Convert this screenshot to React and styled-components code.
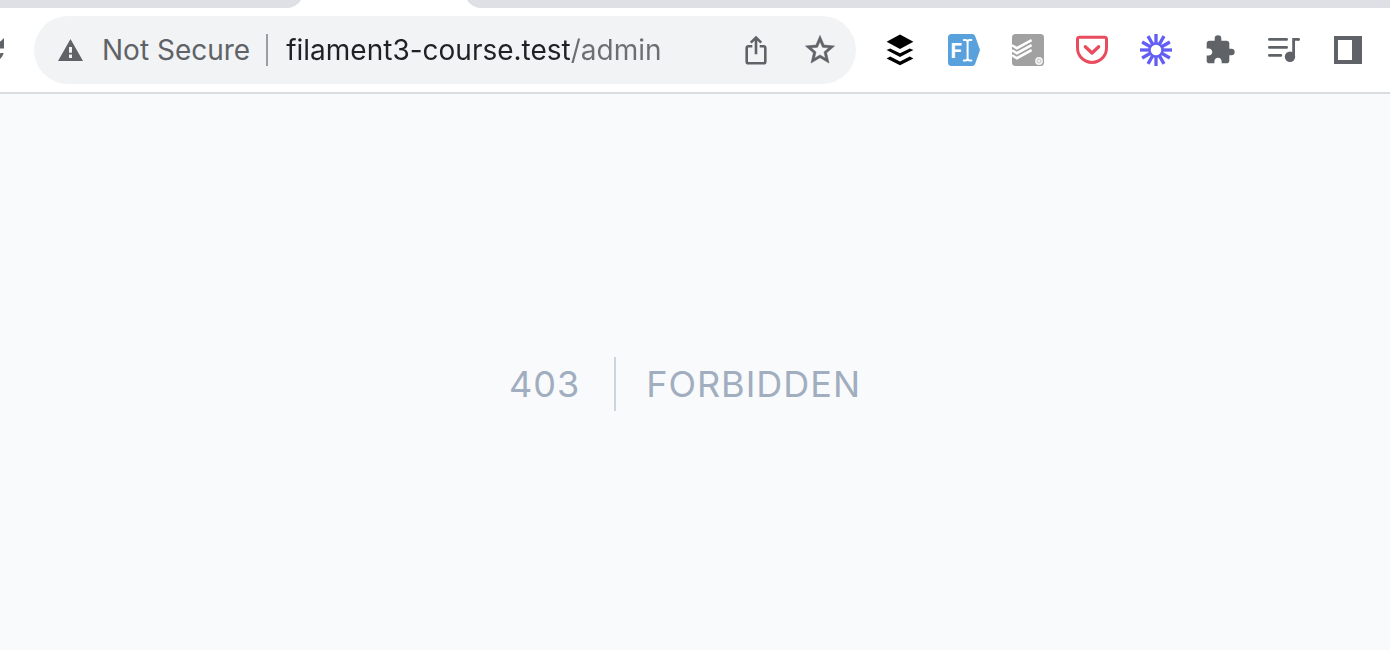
import React from "react";
import styled, { createGlobalStyle } from "styled-components";

const GlobalStyle = createGlobalStyle`
  *, *::before, *::after { box-sizing: border-box; }
  body { margin: 0; background: #f9fafc; }
  button, input { font: inherit; color: inherit; }
`;

const Window = styled.div`
  display: flex;
  flex-direction: column;
  min-height: 100vh;
  font-family: Inter, "Liberation Sans", sans-serif;
`;

const TabStrip = styled.div`
  display: flex;
  align-items: flex-end;
  gap: 162px;
  height: 8px;
  overflow: hidden;
  background: #fff;
`;

const TabGroup = styled.div`
  height: 24px;
  flex: ${(p) => (p.$side === "left" ? "0 0 303px" : "1")};
  background: #dfe0e5;
  border-radius: ${(p) => (p.$side === "left" ? "0 0 16px 0" : "0 0 0 16px")};
`;

const Toolbar = styled.header`
  display: flex;
  align-items: center;
  height: 86px;
  padding-right: 26px;
  background: #fff;
  border-bottom: 2px solid #dadce0;
  color: #5f6368;
`;

const IconButton = styled.button`
  display: flex;
  flex: none;
  align-items: center;
  justify-content: center;
  width: 32px;
  height: 32px;
  padding: 0;
  border: 0;
  background: none;
  cursor: pointer;

  svg { display: block; flex: none; }
`;

const ReloadButton = styled(IconButton)`
  justify-content: flex-end;
  width: 10px;
  height: 36px;
  margin-right: 24px;
  overflow: hidden;
`;

const Omnibox = styled.div`
  display: flex;
  flex: 1;
  align-items: center;
  min-width: 0;
  height: 68px;
  padding: 0 20px 0 24px;
  border-radius: 34px;
  background: #f1f3f4;
  font-size: 28px;
  line-height: 32px;
`;

const SecurityButton = styled.button`
  display: flex;
  flex: none;
  align-items: center;
  gap: 18px;
  padding: 0 16px 0 0;
  border: 0;
  border-right: 2px solid #9a9da1;
  background: none;
  white-space: nowrap;
  cursor: pointer;
`;

const AddressInput = styled.input`
  flex: 1;
  min-width: 0;
  height: 40px;
  margin-left: 18px;
  padding: 0;
  border: 0;
  outline: 0;
  color: #202124;
  background: linear-gradient(to right, #202124 284px, #6b6e72 284px);
  background-clip: text;
  -webkit-text-fill-color: transparent;
`;

const OmniboxActions = styled.div`
  display: flex;
  gap: 32px;
`;

const Extensions = styled.nav`
  display: flex;
  gap: 32px;
  margin-left: 28px;
`;

const ErrorPage = styled.main`
  display: flex;
  flex: 1;
  align-items: flex-start;
  justify-content: center;
  padding: 263px 20px 0 0;
  color: #a0aec0;
  font-size: 36px;
  line-height: 54px;
  letter-spacing: 1px;
`;

const ErrorCode = styled.div`
  padding-right: 34px;
  border-right: 2px solid #cbd5e0;
`;

const ErrorMessage = styled.div`
  padding-left: 30px;
  text-transform: uppercase;
`;

function Icon({ size = 32, viewBox = "0 0 32 32", children }) {
  return (
    <svg width={size} height={size} viewBox={viewBox} fill="currentColor" aria-hidden="true">
      {children}
    </svg>
  );
}

const ReloadIcon = () => (
  <Icon size={36} viewBox="0 0 24 24">
    <path d="M17.65 6.35C16.2 4.9 14.21 4 12 4c-4.42 0-7.99 3.58-7.99 8s3.57 8 7.99 8c3.73 0 6.84-2.55 7.73-6h-2.08c-.82 2.33-3.04 4-5.65 4-3.31 0-6-2.69-6-6s2.69-6 6-6c1.66 0 3.14.69 4.22 1.78L13 11h7V4l-2.35 2.35z" />
  </Icon>
);

const WarningIcon = () => (
  <svg width="26" height="22" viewBox="0 0 26 22" fill="currentColor" aria-hidden="true">
    <path fillRule="evenodd" d="M12.5 0 25 22H0zM11 8v5.700h3V8zM11 15.600v3.400h3v-3.400z" />
  </svg>
);

const ShareIcon = () => (
  <Icon>
    <g fill="none" stroke="currentColor" strokeWidth="2.600">
      <path d="M12.300 12.300H8.600Q6.700 12.300 6.700 14.200v13.200q0 1.900 1.900 1.900h14.800q1.900 0 1.900-1.900V14.200q0-1.900-1.900-1.900h-3.700" />
      <path d="M16 20.300V4M10.800 8.600 16 3.600l5.200 5" />
    </g>
  </Icon>
);

const StarIcon = () => (
  <Icon viewBox="1 1 22 22">
    <path stroke="currentColor" strokeWidth=".4" d="M22 9.24l-7.19-.62L12 2 9.19 8.63 2 9.24l5.46 4.73L5.82 21 12 17.27 18.18 21l-1.63-7.03L22 9.24zM12 15.4l-3.76 2.27 1-4.28-3.32-2.88 4.38-.38L12 6.1l1.71 4.04 4.38.38-3.32 2.88 1 4.28L12 15.4z" />
  </Icon>
);

const BufferIcon = () => (
  <Icon>
    <g fill="#000">
      <path d="M16 .5 29.4 7.7 16 15 2.6 7.7z" />
      <path d="M6.2 14.4 16 19.2l9.8-4.8 3.6 1.7L16 23 2.6 16.1z" />
      <path d="M6.2 22.6 16 27.4l9.8-4.8 3.6 1.8L16 31.3 2.6 24.4z" />
    </g>
  </Icon>
);

const FillerIcon = () => (
  <Icon>
    <path fill="#58a1dc" d="M3.5 0h20.8q2 0 2.7 1.8L31.7 15q.4 1 0 2L27 30.2q-.7 1.8-2.7 1.8H3.5Q0 32 0 28.5v-25Q0 0 3.5 0z" />
    <text x="2.500" y="23.500" fill="#fff" fontSize="20" fontWeight="700">F</text>
    <path fill="none" stroke="#fff" strokeWidth="2" strokeLinecap="round" d="M15.800 6h1.500q2.300 0 2.300 2.200Q19.600 6 21.900 6h1.500M15.800 26.500h1.500q2.300 0 2.300-2.200 0 2.200 2.300 2.200h1.500M19.600 8v16.500" />
  </Icon>
);

const TodoistIcon = () => (
  <Icon>
    <rect width="32" height="32" rx="3.500" fill="#a1a1a1" />
    <path fill="none" stroke="#fff" strokeWidth="2.500" d="M0 11.400 4.900 14.200 19.600 6.200M0 16.400 4.900 19.200 19.600 11.200M0 21.400 4.900 24.200 19.600 16.200" />
    <circle cx="27" cy="27" r="3.900" fill="#f2f2f2" />
    <circle cx="27" cy="27" r="1.900" fill="none" stroke="#c4c4c4" strokeWidth=".9" />
  </Icon>
);

const PocketIcon = () => (
  <Icon>
    <g fill="none" stroke="#e84c5e" strokeLinejoin="round">
      <path strokeWidth="3" d="M3.500 3.200h25q2 0 2 2v8.700a14.500 14.500 0 0 1-29 0V5.200q0-2 2-2z" />
      <path strokeWidth="3.300" strokeLinecap="round" d="M9.300 12.700 16 19l6.700-6.300" />
    </g>
  </Icon>
);

const RAYS = Array.from({ length: 12 }, (_, i) => i * 30);

const LoomIcon = () => (
  <Icon>
    <g stroke="#625df5" fill="none">
      {RAYS.map((angle) => (
        <path key={angle} strokeWidth="3.300" d="M16 0v10" transform={`rotate(${angle} 16 16)`} />
      ))}
      <circle cx="16" cy="16" r="6.500" strokeWidth="2.400" />
    </g>
  </Icon>
);

const PuzzleIcon = () => (
  <Icon viewBox="0 0 24 24">
    <path d="M20.5 11H19V7c0-1.1-.9-2-2-2h-4V3.5a2.5 2.5 0 0 0-5 0V5H4c-1.1 0-1.99.9-1.99 2v3.8H3.5c1.49 0 2.7 1.21 2.7 2.7s-1.21 2.7-2.7 2.7H2V20c0 1.1.9 2 2 2h3.8v-1.5c0-1.49 1.21-2.7 2.7-2.7s2.7 1.21 2.7 2.7V22H17c1.1 0 2-.9 2-2v-4h1.5a2.5 2.5 0 0 0 0-5z" />
  </Icon>
);

const MediaIcon = () => (
  <Icon>
    <g fill="none" stroke="currentColor" strokeWidth="2.800">
      <path strokeLinecap="round" d="M1.400 5.400h17.200M1.400 13.400h17.200M1.400 21.400h11.400" />
      <path d="M25.600 23V5.400H31" />
    </g>
    <path d="M30 4h.600q1.400 0 1.400 1.400t-1.400 1.400H30z" />
    <circle cx="22" cy="22.800" r="5.200" />
  </Icon>
);

const SidePanelIcon = () => (
  <Icon>
    <path fillRule="evenodd" d="M2 2h28v28H2zM6 6v20h14V6z" />
  </Icon>
);

const EXTENSIONS = [
  { label: "Buffer", Glyph: BufferIcon },
  { label: "Form filler", Glyph: FillerIcon },
  { label: "Todoist", Glyph: TodoistIcon },
  { label: "Pocket", Glyph: PocketIcon },
  { label: "Loom", Glyph: LoomIcon },
  { label: "Extensions", Glyph: PuzzleIcon },
  { label: "Media controls", Glyph: MediaIcon },
  { label: "Side panel", Glyph: SidePanelIcon },
];

export default function App() {
  return (
    <Window>
      <GlobalStyle />
      <TabStrip>
        <TabGroup $side="left" />
        <TabGroup $side="right" />
      </TabStrip>
      <Toolbar>
        <ReloadButton aria-label="Reload"><ReloadIcon /></ReloadButton>
        <Omnibox>
          <SecurityButton>
            <WarningIcon />
            Not Secure
          </SecurityButton>
          <AddressInput aria-label="Address" defaultValue="filament3-course.test/admin" spellCheck={false} />
          <OmniboxActions>
            <IconButton aria-label="Share"><ShareIcon /></IconButton>
            <IconButton aria-label="Bookmark"><StarIcon /></IconButton>
          </OmniboxActions>
        </Omnibox>
        <Extensions aria-label="Extensions">
          {EXTENSIONS.map(({ label, Glyph }) => (
            <IconButton key={label} aria-label={label}><Glyph /></IconButton>
          ))}
        </Extensions>
      </Toolbar>
      <ErrorPage>
        <ErrorCode>403</ErrorCode>
        <ErrorMessage>Forbidden</ErrorMessage>
      </ErrorPage>
    </Window>
  );
}
